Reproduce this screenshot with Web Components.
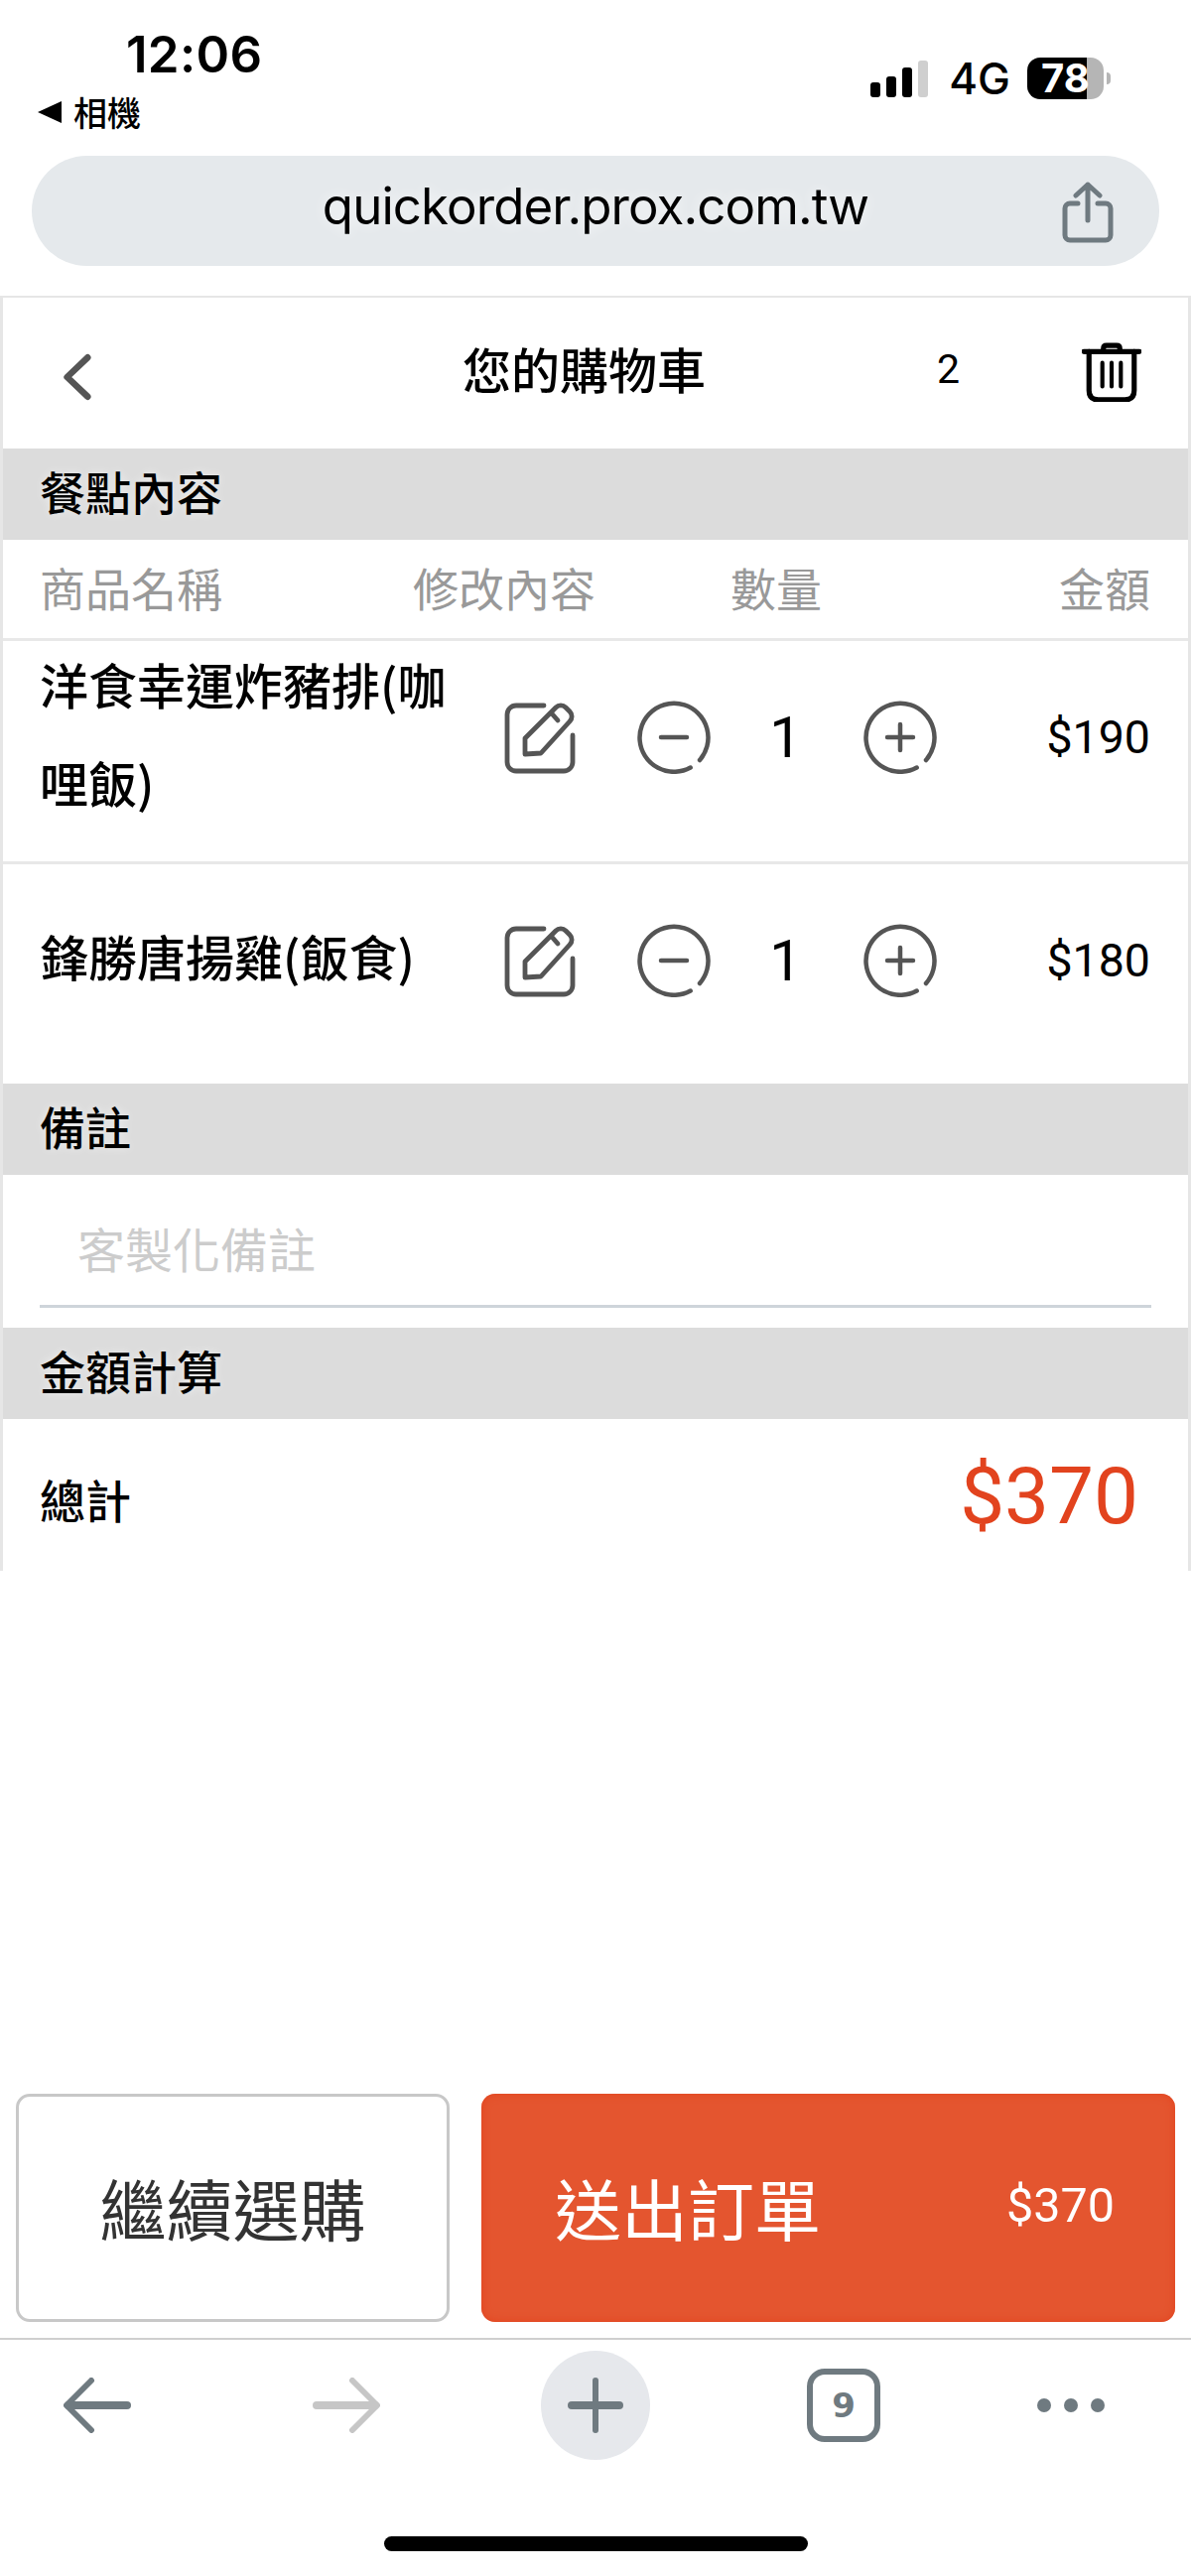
<!DOCTYPE html>
<html lang="zh-Hant">
<head>
<meta charset="utf-8">
<title>您的購物車</title>
<style>
  html, body { margin: 0; background: #fff; }
  body {
    width: 1200px;
    height: 2596px;
    display: flex;
    flex-direction: column;
    font-family: "Noto Sans CJK TC", "Noto Sans", sans-serif;
    color: #000;
    overflow: hidden;
  }
  .grow { flex: 1; }
</style>
</head>
<body>
  <ios-status time="12:06" back="相機" network="4G" battery="78"></ios-status>
  <url-bar>quickorder.prox.com.tw</url-bar>
  <cart-panel>
    <cart-header count="2">您的購物車</cart-header>
    <section-band>餐點內容</section-band>
    <cart-columns></cart-columns>
    <cart-line price="$190" qty="1">洋食幸運炸豬排(咖哩飯)</cart-line>
    <cart-line price="$180" qty="1" last>鋒勝唐揚雞(飯食)</cart-line>
    <section-band>備註</section-band>
    <note-field placeholder="客製化備註"></note-field>
    <section-band>金額計算</section-band>
    <cart-total label="總計" amount="$370"></cart-total>
  </cart-panel>
  <div class="grow"></div>
  <order-actions total="$370"></order-actions>
  <browser-nav tabs="9"></browser-nav>
  <home-bar></home-bar>

<script>
// small helper so every element below only has to say what goes in its shadow root
class Base extends HTMLElement {
    render(html) {
        if (!this.shadowRoot) this.attachShadow({ mode: 'open' });
        this.shadowRoot.innerHTML = html;
    }
}

class IosStatus extends Base {
    connectedCallback() {
        this.render(`
            <style>
                :host { display: flex; justify-content: space-between; height: 157px; box-sizing: border-box; font-family: Inter, "Noto Sans CJK TC", sans-serif; }
                .left { padding: 26px 0 0 38px; }
                .time { font-size: 51px; line-height: 58px; font-weight: 600; margin-left: 89px; letter-spacing: .3px; }
                .back { display: flex; align-items: center; gap: 12px; margin-top: 6px; font: 500 34px/46px "Noto Sans CJK TC", sans-serif; }
                .tri { width: 0; height: 0; border: 11px solid transparent; border-left: 0; border-right: 24px solid #000; }
                .right { display: flex; align-items: flex-start; padding: 58px 81px 0 0; }
                .bars { display: flex; align-items: flex-end; gap: 6px; height: 37px; margin-top: 3px; }
                .bars i { width: 10px; border-radius: 3px; background: #000; }
                .bars i:last-child { background: #cfcfcf; }
                .net { font-size: 44px; line-height: 42px; font-weight: 500; margin-left: 21px; }
                .bat { width: 77px; height: 42px; margin-left: 17px; border-radius: 13px; color: #fff; font-size: 40px; font-weight: 700; line-height: 42px; padding-left: 14px; box-sizing: border-box; background: linear-gradient(90deg, #000 60px, #b5b5b5 60px); }
                .cap { width: 4px; height: 12px; margin: 15px 0 0 3px; background: #b5b5b5; border-radius: 0 4px 4px 0; }
            </style>
            <div class="left">
                <div class="time">${this.getAttribute('time')}</div>
                <div class="back"><span class="tri"></span>${this.getAttribute('back')}</div>
            </div>
            <div class="right">
                <div class="bars"><i style="height:15px"></i><i style="height:21px"></i><i style="height:30px"></i><i style="height:37px"></i></div>
                <div class="net">${this.getAttribute('network')}</div>
                <div class="bat">${this.getAttribute('battery')}</div>
                <div class="cap"></div>
            </div>`);
    }
}

class UrlBar extends Base {
    connectedCallback() {
        this.render(`
            <style>
                :host { display: block; margin: 0 32px; height: 111px; border-radius: 56px; background: #e5e9ec; position: relative; font-family: Inter, sans-serif; }
                .text { height: 100%; display: flex; align-items: center; justify-content: center; font-size: 51px; letter-spacing: -.9px; color: #000; text-shadow: 0 0 14px rgba(255,255,255,.8); margin: -5px 0 0 0; }
                svg { position: absolute; right: 46px; top: 26px; }
            </style>
            <div class="text"><slot></slot></div>
            <svg width="52" height="62" viewBox="0 0 52 62" fill="none" stroke="#6f7a80" stroke-width="5" stroke-linecap="round" stroke-linejoin="round">
                <path d="M16 22H8a5 5 0 0 0-5 5v27a5 5 0 0 0 5 5h36a5 5 0 0 0 5-5V27a5 5 0 0 0-5-5h-8"/>
                <path d="M26 39V3M14 14 26 3l12 11"/>
            </svg>`);
    }
}

class CartPanel extends Base {
    connectedCallback() {
        this.render(`
            <style>
                :host { display: block; margin-top: 30px; height: 1285px; box-sizing: border-box; border: 3px solid #e6e6e6; border-bottom: 0; border-top-width: 2px; }
            </style>
            <slot></slot>`);
    }
}

class CartHeader extends Base {
    connectedCallback() {
        this.render(`
            <style>
                :host { display: flex; align-items: center; height: 152px; position: relative; font-weight: 500; }
                .back { margin-left: 59px; margin-top: 7px; }
                .title { position: absolute; left: 463px; top: 43px; font-size: 49px; line-height: 56px; }
                .count { position: absolute; left: 941px; top: 47px; font: 400 41px/50px Roboto, sans-serif; }
                .trash { position: absolute; left: 1087px; top: 45px; }
            </style>
            <svg class="back" width="30" height="48" viewBox="0 0 32 50" fill="none" stroke="#555" stroke-width="7" stroke-linecap="round" stroke-linejoin="round"><path d="M28 4 6 25l22 21"/></svg>
            <div class="title"><slot></slot></div>
            <div class="count">${this.getAttribute('count')}</div>
            <svg class="trash" width="60" height="60" viewBox="0 0 58 58" fill="none" stroke="#000" stroke-linecap="round" stroke-linejoin="round">
                <path stroke-width="5" d="M2 9h54M21 8V6q0-3 3-3h10q3 0 3 3v2"/>
                <path stroke-width="5" d="M7 9v38q0 9 9 9h26q9 0 9-9V9"/>
                <path stroke-width="4" d="M20 20v23M29 20v23M38 20v23"/>
            </svg>`);
    }
}

class SectionBand extends Base {
    connectedCallback() {
        this.render(`
            <style>
                :host { display: flex; align-items: center; height: 92px; padding-left: 37px; background: #dcdcdc; font-size: 46px; font-weight: 500; text-shadow: 0 0 10px rgba(255,255,255,.55); }
                span { margin-top: -8px; }
            </style>
            <span><slot></slot></span>`);
    }
}

class CartColumns extends Base {
    connectedCallback() {
        this.render(`
            <style>
                :host { display: grid; grid-template-columns: 376px 320px 331px 1fr; align-items: center; height: 102px; padding: 0 38px 5px 37px; box-sizing: border-box; border-bottom: 3px solid #e8e8e8; color: #999; font-size: 46px; font-weight: 400; white-space: nowrap; }
                div:last-child { text-align: right; }
            </style>
            <div>商品名稱</div><div>修改內容</div><div>數量</div><div>金額</div>`);
    }
}

const roundIcon = mark => `
    <svg width="74" height="74" viewBox="0 0 74 74" fill="none" stroke="#555" stroke-width="4.5" stroke-linecap="round">
        <path d="M63 60A34.5 34.5 0 1 0 53.7 67.5"/>
        <path d="${mark}"/>
    </svg>`;

class CartLine extends Base {
    connectedCallback() {
        this.render(`
            <style>
                :host { display: grid; grid-template-columns: 437px 134px 136px 86px 148px 1fr; grid-template-rows: 194px; align-items: center; height: 225px; box-sizing: border-box; padding: 0 38px 28px 37px; border-bottom: 3px solid #e8e8e8; font-weight: 500; }
                :host([last]) { border-bottom: 0; height: 221px; padding-bottom: 27px; }
                .name { font-size: 49px; line-height: 99px; padding: 0 16px 11px 0; }
                .cell { display: flex; justify-content: center; }
                .qty { text-align: center; font: 400 58px/74px Roboto, sans-serif; margin-left: 3px; }
                .price { text-align: right; font: 400 46.5px/60px Roboto, sans-serif; }
            </style>
            <div class="name"><slot></slot></div>
            <div class="cell">
                <svg width="74" height="74" viewBox="0 0 74 74" fill="none" stroke="#555" stroke-width="4.8" stroke-linecap="round" stroke-linejoin="round">
                    <path d="M41 5H13a9 9 0 0 0-9 9v48a9 9 0 0 0 9 9h48a9 9 0 0 0 9-9V35"/>
                    <path d="M22 54V38L53 7a7 7 0 0 1 10 0l4 4a7 7 0 0 1 0 10L38 53ZM48 12l7 8"/>
                </svg>
            </div>
            <div class="cell">${roundIcon('M24 37h26')}</div>
            <div class="qty">${this.getAttribute('qty')}</div>
            <div class="cell">${roundIcon('M24 37h26M37 24v26')}</div>
            <div class="price">${this.getAttribute('price')}</div>`);
    }
}

class NoteField extends Base {
    connectedCallback() {
        this.render(`
            <style>
                :host { display: block; height: 154px; padding: 0 37px; box-sizing: border-box; }
                .box { height: 134px; box-sizing: border-box; border-bottom: 3px solid #ced4da; padding: 40px 0 0 38px; color: #ccc; font-size: 48px; line-height: 66px; }
            </style>
            <div class="box">${this.getAttribute('placeholder')}</div>`);
    }
}

class CartTotal extends Base {
    connectedCallback() {
        this.render(`
            <style>
                :host { display: flex; justify-content: space-between; align-items: center; height: 153px; padding: 0 50px 0 37px; box-sizing: border-box; }
                .label { font-size: 46px; font-weight: 500; margin-top: 6px; }
                .amount { font: 400 80px/90px Roboto, sans-serif; color: #e2431e; margin-top: 2px; }
            </style>
            <div class="label">${this.getAttribute('label')}</div>
            <div class="amount">${this.getAttribute('amount')}</div>`);
    }
}

class OrderActions extends Base {
    connectedCallback() {
        this.render(`
            <style>
                :host { display: flex; gap: 32px; height: 230px; padding: 0 16px; margin-bottom: 16px; font-size: 67px; }
                .keep { width: 437px; box-sizing: border-box; border: 3px solid #c8c8c8; border-radius: 14px; color: #333; display: flex; align-items: center; justify-content: center; padding-bottom: 4px; }
                .send { flex: 1; box-sizing: border-box; border-radius: 14px; background: #e4552f; box-shadow: inset 0 0 8px #e2431e; color: #fff; display: flex; align-items: center; justify-content: space-between; padding: 0 61px 4px 74px; }
                .sum { font: 400 48.5px/60px Roboto, sans-serif; }
            </style>
            <div class="keep">繼續選購</div>
            <div class="send"><span>送出訂單</span><span class="sum">${this.getAttribute('total')}</span></div>`);
    }
}

class BrowserNav extends Base {
    connectedCallback() {
        this.render(`
            <style>
                :host { display: flex; align-items: center; height: 134px; padding-left: 64px; box-sizing: border-box; border-top: 2px solid #cfcfcf; padding-bottom: 1px; }
                svg { display: block; flex: none; }
                .add { width: 110px; height: 110px; margin-left: 162px; border-radius: 50%; background: #e6e8ec; display: flex; align-items: center; justify-content: center; }
                .tabs { width: 74px; height: 74px; margin-left: 158px; box-sizing: border-box; border: 6px solid #6f7a80; border-radius: 18px; display: flex; align-items: center; justify-content: center; color: #6f7a80; font: 700 34px/1 "DejaVu Sans", sans-serif; }
                .more { margin-left: 158px; }
            </style>
            <svg width="68" height="56" viewBox="0 0 68 56" fill="none" stroke="#6f7a80" stroke-width="6" stroke-linecap="round" stroke-linejoin="round"><path d="M28 3 3 28l25 25"/><path stroke-width="8" d="M5 28h59"/></svg>
            <svg style="margin-left:183px" width="68" height="56" viewBox="0 0 68 56" fill="none" stroke="#c6c6c6" stroke-width="6" stroke-linecap="round" stroke-linejoin="round"><path d="m40 3 25 25-25 25"/><path stroke-width="8" d="M4 28h59"/></svg>
            <div class="add"><svg width="56" height="56" viewBox="0 0 56 56" fill="none" stroke="#6f7a80" stroke-linecap="round"><path stroke-width="6" d="M28 3v50"/><path stroke-width="8" d="M4 28h48"/></svg></div>
            <div class="tabs">${this.getAttribute('tabs')}</div>
            <svg class="more" width="68" height="14" viewBox="0 0 68 14" fill="#6f7a80"><circle cx="7" cy="7" r="7"/><circle cx="34" cy="7" r="7"/><circle cx="61" cy="7" r="7"/></svg>`);
    }
}

class HomeBar extends Base {
    connectedCallback() {
        this.render(`
            <style>
                :host { display: flex; justify-content: center; height: 15px; padding-top: 66px; margin-bottom: 25px; }
                div { width: 427px; height: 15px; border-radius: 8px; background: #000; }
            </style>
            <div></div>`);
    }
}

customElements.define('ios-status', IosStatus);
customElements.define('url-bar', UrlBar);
customElements.define('cart-panel', CartPanel);
customElements.define('cart-header', CartHeader);
customElements.define('section-band', SectionBand);
customElements.define('cart-columns', CartColumns);
customElements.define('cart-line', CartLine);
customElements.define('note-field', NoteField);
customElements.define('cart-total', CartTotal);
customElements.define('order-actions', OrderActions);
customElements.define('browser-nav', BrowserNav);
customElements.define('home-bar', HomeBar);
</script>
</body>
</html>
